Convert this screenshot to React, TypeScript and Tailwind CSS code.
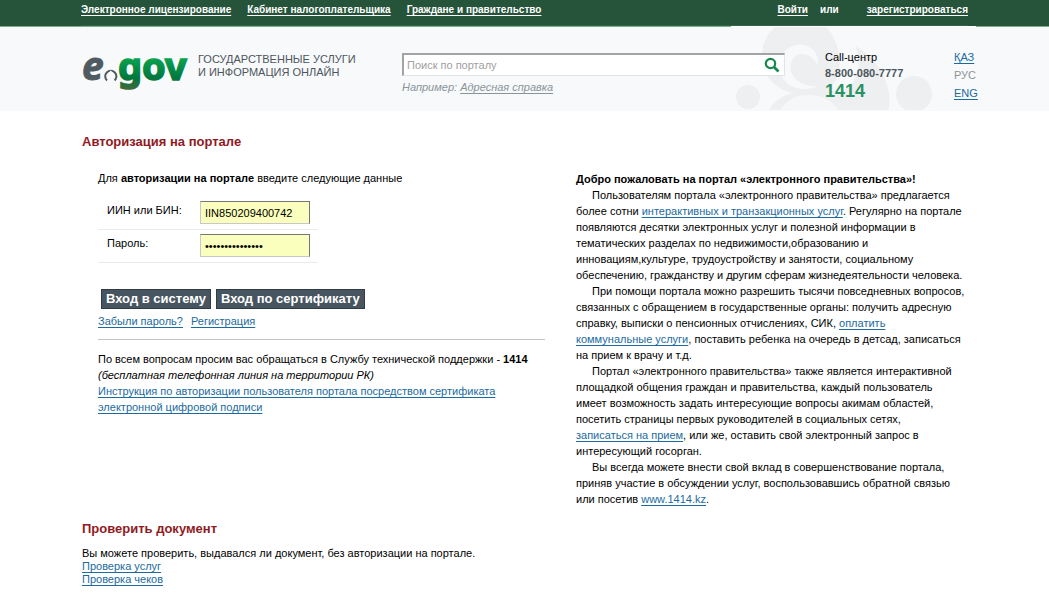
import type { AnchorHTMLAttributes } from 'react';

const topLinks = ['Электронное лицензирование', 'Кабинет налогоплательщика', 'Граждане и правительство'];

function Link({ className = 'text-[#1b6ba0]', ...props }: AnchorHTMLAttributes<HTMLAnchorElement>) {
  return <a href="#" className={`underline underline-offset-2 [text-decoration-skip-ink:none] ${className}`} {...props} />;
}

function Logo() {
  return (
    <svg viewBox="0 0 108 44" className="h-11 w-[108px] shrink-0 overflow-visible" role="img" aria-label="e.gov">
      <defs>
        <linearGradient id="gov" gradientUnits="userSpaceOnUse" x1="0" y1="8" x2="0" y2="40">
          <stop offset="0" stopColor="#0aa550" />
          <stop offset="0.65" stopColor="#00783f" />
          <stop offset="1" stopColor="#3c6a3c" />
        </linearGradient>
      </defs>
      <text
        x="0"
        y="31"
        fontSize="39"
        fontWeight="700"
        fontStyle="italic"
        fontFamily="Noto Sans, sans-serif"
        fill="#4f5b60"
        stroke="#4f5b60"
        strokeWidth="1"
      >
        e
      </text>
      <path d="M25 31.500a5.600 5.600 0 1 1 7.600 0" fill="none" stroke="#4f5b60" strokeWidth="2" />
      <path d="M28.800 21.500l4.500 5h-2.800v6h-3.400v-6h-2.800z" fill="#f8f9fb" />
      <text
        x="36"
        y="31"
        fontSize="38"
        fontWeight="700"
        fontFamily="Noto Sans, sans-serif"
        fill="url(#gov)"
        stroke="url(#gov)"
        strokeWidth="1.600"
      >
        gov
      </text>
    </svg>
  );
}

function Ornament() {
  return (
    <svg viewBox="0 0 245 84" className="absolute -top-px right-[73px] h-[84px] w-[245px]" aria-hidden="true">
      <path d="M0 0h245v1H0z" fill="#fff" />
      <g fill="#edeff1">
        <circle cx="17" cy="71" r="12" />
        <circle cx="183" cy="68" r="18" />
        <path d="M44 1C34 10 30 22 31 34c2 18 14 29 31 33-11 2-19 8-24 17h119c4-12 0-28-9-42-6-10-14-17-24-22 4 10 5 22 1 31-3 7-9 12-17 15-4 0-8-1-10-3 9-9 12-20 10-32-1-13-6-23-13-30z" />
      </g>
      <path
        d="M87 40C89 26 78 17 66 19c-13 2-20 14-17 27 4 15 21 21 39 14-13 1-25-4-28-15-2-10 4-18 12-17 7 1 12 5 15 12z"
        fill="#f8f9fb"
      />
      <path d="M50 84c6-11 16-15 28-15 13 0 22 5 29 15z" fill="#f6f7f9" />
    </svg>
  );
}

function TopBar() {
  return (
    <div className="border-b border-[#7fa88c] bg-[#25543a] px-[81px] text-[10px] font-bold text-white">
      <div className="flex h-[26px] items-start justify-between border-b border-[#2f6546] pt-[2px] leading-4">
        <nav className="flex gap-4">
          {topLinks.map((title) => (
            <Link key={title} className="text-white">{title}</Link>
          ))}
        </nav>
        <div className="flex">
          <Link className="mr-3 text-white">Войти</Link>
          <span className="mr-7">или</span>
          <Link className="text-white">зарегистрироваться</Link>
        </div>
      </div>
    </div>
  );
}

function Header() {
  return (
    <header className="relative h-[84px] bg-[#f8f9fb] pr-[74px] pl-[82px]">
      <Ornament />
      <div className="relative flex pt-[22px]">
        <div className="flex w-80 gap-2">
          <Logo />
          <p className="pt-1 leading-[13px] text-[#4c565b]">
            ГОСУДАРСТВЕННЫЕ УСЛУГИ
            <br />И ИНФОРМАЦИЯ ОНЛАЙН
          </p>
        </div>
        <form className="flex-1 pt-1" onSubmit={(e) => e.preventDefault()}>
          <div className="flex h-[23px] items-center border-t-2 border-r border-b border-l-2 border-t-[#a3a3a3] border-r-[#e3e3e3] border-b-[#e3e3e3] border-l-[#a3a3a3] bg-white">
            <input
              type="text"
              aria-label="Поиск по порталу"
              placeholder="Поиск по порталу"
              className="h-full min-w-0 flex-1 px-[3px] outline-none placeholder:text-[#a0a0a0]"
            />
            <button type="submit" aria-label="Найти" className="mr-1">
              <svg viewBox="0 0 16 16" className="size-4" fill="none" stroke="#17894d">
                <circle cx="6.500" cy="6.500" r="4.700" strokeWidth="2.200" />
                <path d="M10 10l4.500 4.500" strokeWidth="2.600" />
              </svg>
            </button>
          </div>
          <p className="mt-[3px] leading-4 text-[#8a9499] italic">
            Например: <Link className="text-[#8a9499]">Адресная справка</Link>
          </p>
        </form>
        <div className="ml-10 w-[129px]">
          <p className="leading-4">Call-центр</p>
          <p className="leading-4 font-bold text-[#4c565b]">8-800-080-7777</p>
          <p className="text-lg leading-5 font-bold text-[#2b9162]">1414</p>
        </div>
        <div className="flex w-[21px] flex-col gap-[2px] leading-4">
          <Link>ҚАЗ</Link>
          <span className="text-[#8d9296]">РУС</span>
          <Link>ENG</Link>
        </div>
      </div>
    </header>
  );
}

const fieldClass =
  'h-[23px] w-[110px] border border-t-[#767676] border-r-[#767676] border-b-[#c8c8c8] border-l-[#c8c8c8] bg-[#faffbd] px-1 outline-none';
const buttonClass = 'h-5 border border-[#2f3c45] bg-[#475560] px-1 text-[13px] leading-4 font-bold text-white';

function LoginForm() {
  return (
    <section className="pl-4">
      <p className="leading-4">
        Для <b>авторизации на портале</b> введите следующие данные
      </p>
      <form onSubmit={(e) => e.preventDefault()}>
        <div className="mt-[11px] w-[220px]">
          <div className="flex h-[33px] border-b border-[#ebebeb] pt-1 pl-[9px]">
            <label htmlFor="iin" className="w-[93px] pt-px leading-4">ИИН или БИН:</label>
            <input id="iin" type="text" defaultValue="IIN850209400742" className={fieldClass} />
          </div>
          <div className="flex h-[33px] border-b border-[#ebebeb] pt-1 pl-[9px]">
            <label htmlFor="password" className="w-[93px] pt-px leading-4">Пароль:</label>
            <input id="password" type="password" defaultValue="123456789012345" className={fieldClass} />
          </div>
        </div>
        <div className="mt-[26px] flex gap-[5px] pl-[3px]">
          <button type="submit" className={buttonClass}>Вход в систему</button>
          <button type="button" className={buttonClass}>Вход по сертификату</button>
        </div>
      </form>
      <div className="mt-1 flex gap-2 leading-4">
        <Link>Забыли пароль?</Link>
        <Link>Регистрация</Link>
      </div>
      <div className="mt-[10px] border-t border-[#c4c4c4] pt-[11px] leading-4">
        <p>
          По всем вопросам просим вас обращаться в Службу технической поддержки - <b>1414</b>
        </p>
        <p className="italic">(бесплатная телефонная линия на территории РК)</p>
        <Link>Инструкция по авторизации пользователя портала посредством сертификата электронной цифровой подписи</Link>
      </div>
    </section>
  );
}

function Welcome() {
  return (
    <section className="pt-px pr-2 leading-4">
      <h2 className="font-bold">Добро пожаловать на портал «электронного правительства»!</h2>
      <p className="indent-4">
        Пользователям портала «электронного правительства» предлагается более сотни{' '}
        <Link>интерактивных и транзакционных услуг</Link>. Регулярно на портале появляются десятки электронных услуг и
        полезной информации в <br />
        тематических разделах по недвижимости,образованию и инновациям,культуре, трудоустройству и занятости, социальному{' '}
        <br />
        обеспечению, гражданству и другим сферам жизнедеятельности человека.
      </p>
      <p className="indent-4">
        При помощи портала можно разрешить тысячи повседневных вопросов, связанных с обращением в государственные
        органы: получить адресную справку, выписки о пенсионных отчислениях, СИК,{' '}
        <Link>
          оплатить <br />
          коммунальные услуги
        </Link>
        , поставить ребенка на очередь в детсад, записаться <br />
        на прием к врачу и т.д.
      </p>
      <p className="indent-4">
        Портал «электронного правительства» также является интерактивной площадкой общения граждан и правительства,
        каждый пользователь <br />
        имеет возможность задать интересующие вопросы акимам областей, посетить страницы первых руководителей в
        социальных сетях, <br />
        <Link>записаться на прием</Link>, или же, оставить свой электронный запрос в интересующий госорган.
      </p>
      <p className="indent-4">
        Вы всегда можете внести свой вклад в совершенствование портала, приняв участие в обсуждении услуг,
        воспользовавшись обратной связью <br />
        или посетив <Link>www.1414.kz</Link>.
      </p>
    </section>
  );
}

export default function App() {
  return (
    <div className="min-h-screen bg-white font-['Liberation_Sans',Arial,sans-serif] text-[11px] text-black">
      <TopBar />
      <Header />
      <main className="pt-[23px] pr-[74px] pb-4 pl-[82px]">
        <h1 className="text-[13px] leading-4 font-bold text-[#8f1a1f]">Авторизация на портале</h1>
        <div className="mt-5 grid grid-cols-[1fr_399px] gap-[31px]">
          <LoginForm />
          <Welcome />
        </div>
        <section className="mt-[14px]">
          <h2 className="text-[13px] leading-4 font-bold text-[#8f1a1f]">Проверить документ</h2>
          <div className="mt-[10px] flex flex-col items-start leading-[13px]">
            <p>Вы можете проверить, выдавался ли документ, без авторизации на портале.</p>
            <Link>Проверка услуг</Link>
            <Link>Проверка чеков</Link>
          </div>
        </section>
      </main>
    </div>
  );
}
